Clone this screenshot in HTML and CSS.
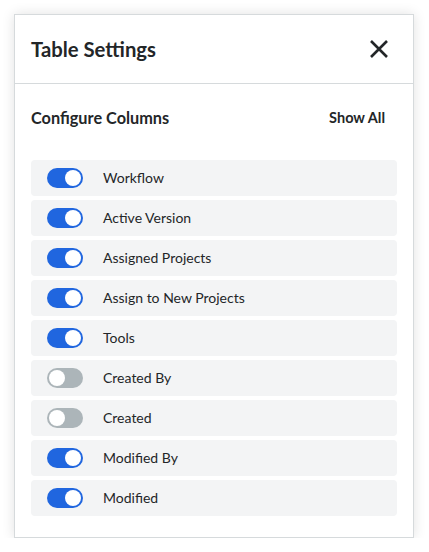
FILE: index.html
```html
<!DOCTYPE html>
<html>
<head>
<meta charset="utf-8">
<link rel="stylesheet" href="styles.css">
</head>
<body>
<div class="panel">
  <div class="header">
    <h1 class="title">Table Settings</h1>
    <button class="close" aria-label="Close">
      <svg width="20" height="20" viewBox="0 0 20 20"><path d="M2 2 L18 18 M18 2 L2 18" stroke="#232628" stroke-width="2.6" stroke-linecap="butt" fill="none"/></svg>
    </button>
  </div>
  <div class="content">
    <div class="section-head">
      <h2 class="section-title">Configure Columns</h2>
      <button class="show-all">Show All</button>
    </div>
    <ul class="rows">
      <li class="row"><span class="toggle on"><span class="knob"></span></span><span class="label">Workflow</span></li>
      <li class="row"><span class="toggle on"><span class="knob"></span></span><span class="label">Active Version</span></li>
      <li class="row"><span class="toggle on"><span class="knob"></span></span><span class="label">Assigned Projects</span></li>
      <li class="row"><span class="toggle on"><span class="knob"></span></span><span class="label">Assign to New Projects</span></li>
      <li class="row"><span class="toggle on"><span class="knob"></span></span><span class="label">Tools</span></li>
      <li class="row"><span class="toggle off"><span class="knob"></span></span><span class="label">Created By</span></li>
      <li class="row"><span class="toggle off"><span class="knob"></span></span><span class="label">Created</span></li>
      <li class="row"><span class="toggle on"><span class="knob"></span></span><span class="label">Modified By</span></li>
      <li class="row"><span class="toggle on"><span class="knob"></span></span><span class="label">Modified</span></li>
    </ul>
  </div>
</div>
</body>
</html>
```
FILE: styles.css
```css
html, body {
  margin: 0;
  padding: 0;
  background: #ffffff;
}
body {
  padding: 14px 15px 0 14px;
  font-family: Lato, "Open Sans", sans-serif;
  color: #232628;
}
.panel {
  width: 400px;
  height: 524px;
  box-sizing: border-box;
  border: 1px solid #d6dadc;
  background: #fff;
  box-shadow: 0 0 12px rgba(0, 0, 0, 0.12);
  display: flex;
  flex-direction: column;
}
.header {
  height: 69px;
  box-sizing: border-box;
  border-bottom: 1px solid #d6dadc;
  display: flex;
  align-items: center;
  justify-content: space-between;
  padding: 0 24px 0 16px;
}
.title {
  margin: 0;
  font-size: 20.3px;
  font-weight: 700;
  line-height: 24px;
  color: #232628;
}
.close {
  border: 0;
  background: none;
  padding: 0;
  width: 20px;
  height: 20px;
  display: flex;
}
.content {
  padding: 24px 16px 0 16px;
}
.section-head {
  display: flex;
  align-items: center;
  justify-content: space-between;
  height: 20px;
  margin-bottom: 32px;
}
.section-title {
  margin: 0;
  font-size: 16.3px;
  font-weight: 700;
  line-height: 20px;
  color: #232628;
}
.show-all {
  border: 0;
  background: none;
  padding: 0 12px 0 0;
  font-family: Lato, "Open Sans", sans-serif;
  font-size: 14.5px;
  line-height: 18px;
  font-weight: 700;
  color: #232628;
}
.rows {
  list-style: none;
  margin: 0;
  padding: 0;
  display: flex;
  flex-direction: column;
  gap: 4px;
}
.row {
  height: 36px;
  background: #f3f4f5;
  border-radius: 4px;
  display: flex;
  align-items: center;
  padding: 0 16px;
  gap: 20px;
}
.toggle {
  width: 36px;
  height: 20px;
  border-radius: 10px;
  box-sizing: border-box;
  padding: 2px;
  display: flex;
  flex-shrink: 0;
}
.toggle.on {
  background: #2066df;
  justify-content: flex-end;
}
.toggle.off {
  background: #acb5b9;
  justify-content: flex-start;
}
.knob {
  width: 16px;
  height: 16px;
  border-radius: 50%;
  background: #fff;
}
.label {
  font-size: 14px;
  line-height: 20px;
  color: #232628;
}
```
